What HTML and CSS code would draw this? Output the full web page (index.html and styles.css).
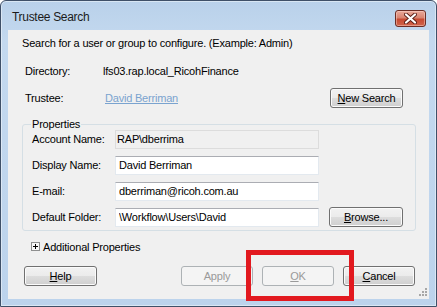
FILE: index.html
```html
<!DOCTYPE html>
<html lang="en">
<head>
    <meta charset="UTF-8">
    <title>Trustee Search</title>
    <link rel="stylesheet" href="styles.css">
</head>
<body>

<div class="window">
    <div class="titlebar">
        <span class="title">Trustee Search</span>
        <span class="close">
            <svg width="13" height="11" viewBox="0 0 13 11">
                <path d="M2 1.5 L11 9.5 M11 1.5 L2 9.5" stroke="#5a1e16" stroke-width="4" stroke-linecap="round"/>
                <path d="M2 1.5 L11 9.5 M11 1.5 L2 9.5" stroke="#ffffff" stroke-width="2.2" stroke-linecap="round"/>
            </svg>
        </span>
    </div>

    <div class="client">
        <p class="intro">Search for a user or group to configure. (Example: Admin)</p>

        <div class="info-row">
            <span class="info-label">Directory:</span>
            <span>lfs03.rap.local_RicohFinance</span>
        </div>
        <div class="info-row trustee">
            <span class="info-label">Trustee:</span>
            <a class="link" href="#">David Berriman</a>
            <button class="btn btn-search"><u>N</u>ew Search</button>
        </div>

        <fieldset class="props">
            <legend>Properties</legend>
            <div class="prop-row">
                <label>Account Name:</label>
                <input class="field readonly" type="text" value="RAP\dberrima" readonly>
            </div>
            <div class="prop-row">
                <label>Display Name:</label>
                <input class="field" type="text" value="David Berriman">
            </div>
            <div class="prop-row">
                <label>E-mail:</label>
                <input class="field" type="text" value="dberriman@ricoh.com.au">
            </div>
            <div class="prop-row">
                <label>Default Folder:</label>
                <input class="field" type="text" value="\Workflow\Users\David">
                <button class="btn btn-browse"><u>B</u>rowse...</button>
            </div>
        </fieldset>

        <div class="more">
            <svg width="9" height="9" viewBox="0 0 9 9">
                <rect x="0.5" y="0.5" width="8" height="8" fill="#f7f7f7" stroke="#8e8f8f"/>
                <path d="M2 4.5 H7 M4.5 2 V7" stroke="#000" stroke-width="1"/>
            </svg>
            <span>Additional Properties</span>
        </div>

        <div class="actions">
            <button class="btn btn-help"><u>H</u>elp</button>
            <span class="spacer"></span>
            <button class="btn" disabled>Apply</button>
            <button class="btn" disabled><u>O</u>K</button>
            <button class="btn"><u>C</u>ancel</button>
        </div>

        <svg class="grip" width="9" height="9" viewBox="0 0 9 9">
            <g fill="#a7a7a7">
                <rect x="7" y="1" width="2" height="2"/>
                <rect x="4" y="4" width="2" height="2"/>
                <rect x="7" y="4" width="2" height="2"/>
                <rect x="1" y="7" width="2" height="2"/>
                <rect x="4" y="7" width="2" height="2"/>
                <rect x="7" y="7" width="2" height="2"/>
            </g>
        </svg>
    </div>
</div>

<div class="highlight"></div>

</body>
</html>
```

FILE: styles.css
```css
body {
    margin: 0;
    width: 437px;
    height: 307px;
    overflow: hidden;
    position: relative;
    font-family: "Liberation Sans", Arial, sans-serif;
    font-size: 11px;
    letter-spacing: -0.2px;
    color: #000;
    background: #fff;
}
.window {
    box-sizing: border-box;
    width: 437px;
    height: 307px;
    display: flex;
    flex-direction: column;
    padding: 0 7px 7px 7px;
    border: 1px solid #3f5068;
    border-radius: 6px 6px 0 0;
    background: linear-gradient(to bottom, #b9d1ea 0, #c4d9ef 40px, #bcd3ec 100%);
    box-shadow: inset 0 0 0 1px rgba(255, 255, 255, 0.45);
}
.titlebar {
    height: 29px;
    display: flex;
    align-items: flex-start;
    flex-shrink: 0;
}
.title {
    margin: 9px 0 0 4px;
    font-size: 12px;
    letter-spacing: -0.3px;
    color: #1b1b1b;
    flex: 1;
}
.close {
    box-sizing: border-box;
    width: 31px;
    height: 17px;
    margin: 9px 3px 0 0;
    display: flex;
    align-items: center;
    justify-content: center;
    border: 1px solid #6b2d25;
    border-radius: 3px;
    background: linear-gradient(to bottom, #e9a99a 0%, #d88471 45%, #c74a32 55%, #d0654c 100%);
    box-shadow: inset 0 0 0 1px rgba(255, 220, 210, 0.45);
}
.client {
    flex: 1;
    position: relative;
    display: flex;
    flex-direction: column;
    padding: 7px 13px 0 14px;
    background: #f0f0f0;
}
.intro {
    margin: 0;
    line-height: 13px;
}
.info-row {
    display: flex;
    align-items: center;
    height: 13px;
    margin-top: 14px;
    padding-left: 3px;
}
.info-row.trustee {
    height: 20px;
    margin-top: 11px;
}
.info-label {
    width: 78px;
    flex-shrink: 0;
}
.link {
    color: #7aa3cf;
    flex: 1;
    margin-left: 2px;
}
.btn {
    box-sizing: border-box;
    height: 20px;
    width: 72px;
    padding: 0;
    font-family: "Liberation Sans", Arial, sans-serif;
    font-size: 11px;
    letter-spacing: -0.2px;
    color: #000;
    border: 1px solid #707070;
    border-radius: 3px;
    background: linear-gradient(to bottom, #f2f2f2 0%, #ebebeb 50%, #dddddd 51%, #cfcfcf 100%);
    box-shadow: inset 0 0 0 1px #fbfbfb;
}
.btn:disabled {
    color: #9a9a9a;
    border-color: #adb2b5;
    background: #f4f4f4;
    box-shadow: none;
}
.btn-search {
    width: 73px;
    margin-right: 13px;
}
.props {
    margin: 11px 0 0 0;
    padding: 0 12px 3px 9px;
    border: 1px solid #d5dfe5;
    border-radius: 3px;
    display: flex;
    flex-direction: column;
    gap: 6px;
}
.props legend {
    line-height: 10px;
    padding: 0 1px;
    margin-left: -1px;
}
.prop-row {
    display: flex;
    align-items: center;
    height: 20px;
}
.prop-row label {
    width: 83px;
    flex-shrink: 0;
}
.field {
    box-sizing: border-box;
    width: 204px;
    height: 19px;
    margin: 0;
    padding: 0 3px;
    font-family: "Liberation Sans", Arial, sans-serif;
    font-size: 11px;
    letter-spacing: -0.2px;
    color: #000;
    border: 1px solid #e3e9ef;
    border-top-color: #abadb3;
    background: #fff;
    outline: none;
}
.field.readonly {
    background: #f0f0f0;
    border-color: #dcdcdc;
    padding-left: 1px;
}
.btn-browse {
    width: 74px;
    margin-left: 10px;
}
.more {
    display: flex;
    align-items: center;
    gap: 3px;
    height: 13px;
    margin-top: 9px;
    padding-left: 9px;
}
.actions {
    display: flex;
    gap: 9px;
    margin-top: 13px;
    padding: 0 1px 0 2px;
}
.btn-help {
    width: 73px;
}
.spacer {
    flex: 1;
}
.grip {
    position: absolute;
    right: 2px;
    bottom: 3px;
}
.highlight {
    position: absolute;
    left: 246px;
    top: 250px;
    width: 108px;
    height: 51px;
    box-sizing: border-box;
    border: 5px solid #e2191f;
}
```
